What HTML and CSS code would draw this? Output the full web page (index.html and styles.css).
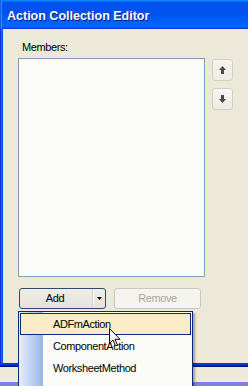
FILE: index.html
```html
<!DOCTYPE html>
<html>
<head>
<meta charset="utf-8">
<link rel="stylesheet" href="styles.css">
</head>
<body>
<div class="window">
  <div class="titlebar">Action Collection Editor</div>
  <div class="client">
    <div class="label">Members:</div>
    <div class="row">
      <div class="listbox"></div>
      <div class="side">
        <div class="sbtn">
          <svg width="7" height="8" viewBox="0 0 7 8"><path d="M3.5 0 L7 4 L5 4 L5 8 L2 8 L2 4 L0 4 Z" fill="#4a4a4a"/></svg>
        </div>
        <div class="sbtn">
          <svg width="7" height="8" viewBox="0 0 7 8"><path d="M3.5 8 L7 4 L5 4 L5 0 L2 0 L2 4 L0 4 Z" fill="#4a4a4a"/></svg>
        </div>
      </div>
    </div>
    <div class="actions">
      <div class="btn add">
        <span class="add-main">Add</span>
        <span class="add-sep"></span>
        <span class="add-arrow"><svg width="5" height="3" viewBox="0 0 5 3"><path d="M0 0 H5 L2.5 3 Z" fill="#000"/></svg></span>
      </div>
      <div class="btn remove">Remove</div>
    </div>
  </div>
  <div class="frame-bottom"></div>
  <div class="behind"></div>
  <div class="taskbar"></div>
</div>

<div class="menu">
  <div class="item active">ADFmAction</div>
  <div class="item">ComponentAction</div>
  <div class="item">WorksheetMethod</div>
  <div class="item">ConfigureAction</div>
</div>

<svg class="cursor" width="12" height="19" viewBox="0 0 12 19">
  <path d="M0.5 0.5 L0.5 15.5 L4 12 L6.5 18 L8.5 17.2 L6 11.3 L11 11.3 Z" fill="#fff" stroke="#000" stroke-width="1" stroke-linejoin="miter"/>
</svg>
</body>
</html>
```

FILE: styles.css
```css
html, body {
  margin: 0;
  padding: 0;
}
body {
  width: 248px;
  height: 386px;
  overflow: hidden;
  position: relative;
  background: #ECE9D8;
  font-family: "Liberation Sans", Arial, sans-serif;
  font-size: 11px;
  letter-spacing: -0.4px;
  color: #000;
}
.window {
  display: flex;
  flex-direction: column;
}
.titlebar {
  height: 29px;
  box-sizing: border-box;
  padding: 10px 0 0 7px;
  line-height: 13px;
  font-size: 12.5px;
  font-weight: bold;
  letter-spacing: 0;
  color: #fff;
  text-shadow: 1px 1px #0a1883;
  background: linear-gradient(180deg, #0997ff, #0053ee 8%, #0050ee 40%, #0066ff 88%, #0066ff 93%, #005bff 95%, #003dd7 96%, #003dd7);
  box-shadow: inset 1px 0 #0a5fe8, inset 2px 0 #3d8bff;
}
.client {
  height: 334px;
  box-sizing: border-box;
  padding: 12px 0 0 18px;
  display: flex;
  flex-direction: column;
  box-shadow: inset 1px 0 #0831d9, inset 2px 0 #166aee, inset 3px 0 #0855dd;
}
.label {
  height: 13px;
  line-height: 13px;
  margin: 0 0 4px 4px;
}
.row {
  display: flex;
  gap: 7px;
  align-items: flex-start;
}
.listbox {
  width: 187px;
  height: 219px;
  box-sizing: border-box;
  border: 1px solid #7f9db9;
  background: #fcfdfa;
}
.side {
  display: flex;
  flex-direction: column;
  gap: 7px;
  margin-top: 1px;
}
.sbtn {
  width: 21px;
  height: 22px;
  box-sizing: border-box;
  border: 1px solid #d3d0c3;
  border-radius: 3px;
  background: linear-gradient(180deg, #f6f5f0, #eeece3);
  display: flex;
  align-items: center;
  justify-content: center;
}
.actions {
  display: flex;
  gap: 8px;
  margin: 11px 0 0 1px;
}
.btn {
  width: 87px;
  height: 21px;
  box-sizing: border-box;
  border-radius: 3px;
  line-height: 19px;
}
.add {
  display: flex;
  border: 1px solid #2a4a6e;
  background: linear-gradient(180deg, #eeede8, #e3e2db);
  box-shadow: inset 0 1px #f4f3ef;
}
.add-main {
  flex: 1;
  text-align: center;
  padding-right: 2px;
}
.add-sep {
  width: 2px;
  background: linear-gradient(90deg, #d0cec4 0 1px, #fff 1px);
}
.add-arrow {
  width: 11px;
  display: flex;
  align-items: center;
  justify-content: center;
}
.remove {
  border: 1px solid #cac8bb;
  background: #f5f4ee;
  color: #aca899;
  text-align: center;
}
.frame-bottom {
  height: 4px;
  background: linear-gradient(180deg, #0831d9 0 1px, #0a3fe0 1px 2px, #001ea0 2px 3px, #00138c 3px);
}
.behind {
  height: 15px;
  background: #ece9d8;
}
.taskbar {
  height: 4px;
  background: #7b84d9;
}
.menu {
  position: absolute;
  left: 18px;
  top: 311px;
  width: 175px;
  box-sizing: border-box;
  border: 1px solid #0b2a7a;
  padding: 1px;
  background: linear-gradient(90deg, #e4eefd 0, #9ab6e8 24px, #fbfbf7 24px);
  box-shadow: 2px 2px 2px rgba(0, 0, 0, 0.3);
}
.item {
  height: 22px;
  box-sizing: border-box;
  border: 1px solid transparent;
  line-height: 20px;
  padding-left: 32px;
  white-space: nowrap;
}
.item.active {
  background: #fbebc6;
  border-color: #0b2a7a;
}
.cursor {
  position: absolute;
  left: 109px;
  top: 328px;
}
```
